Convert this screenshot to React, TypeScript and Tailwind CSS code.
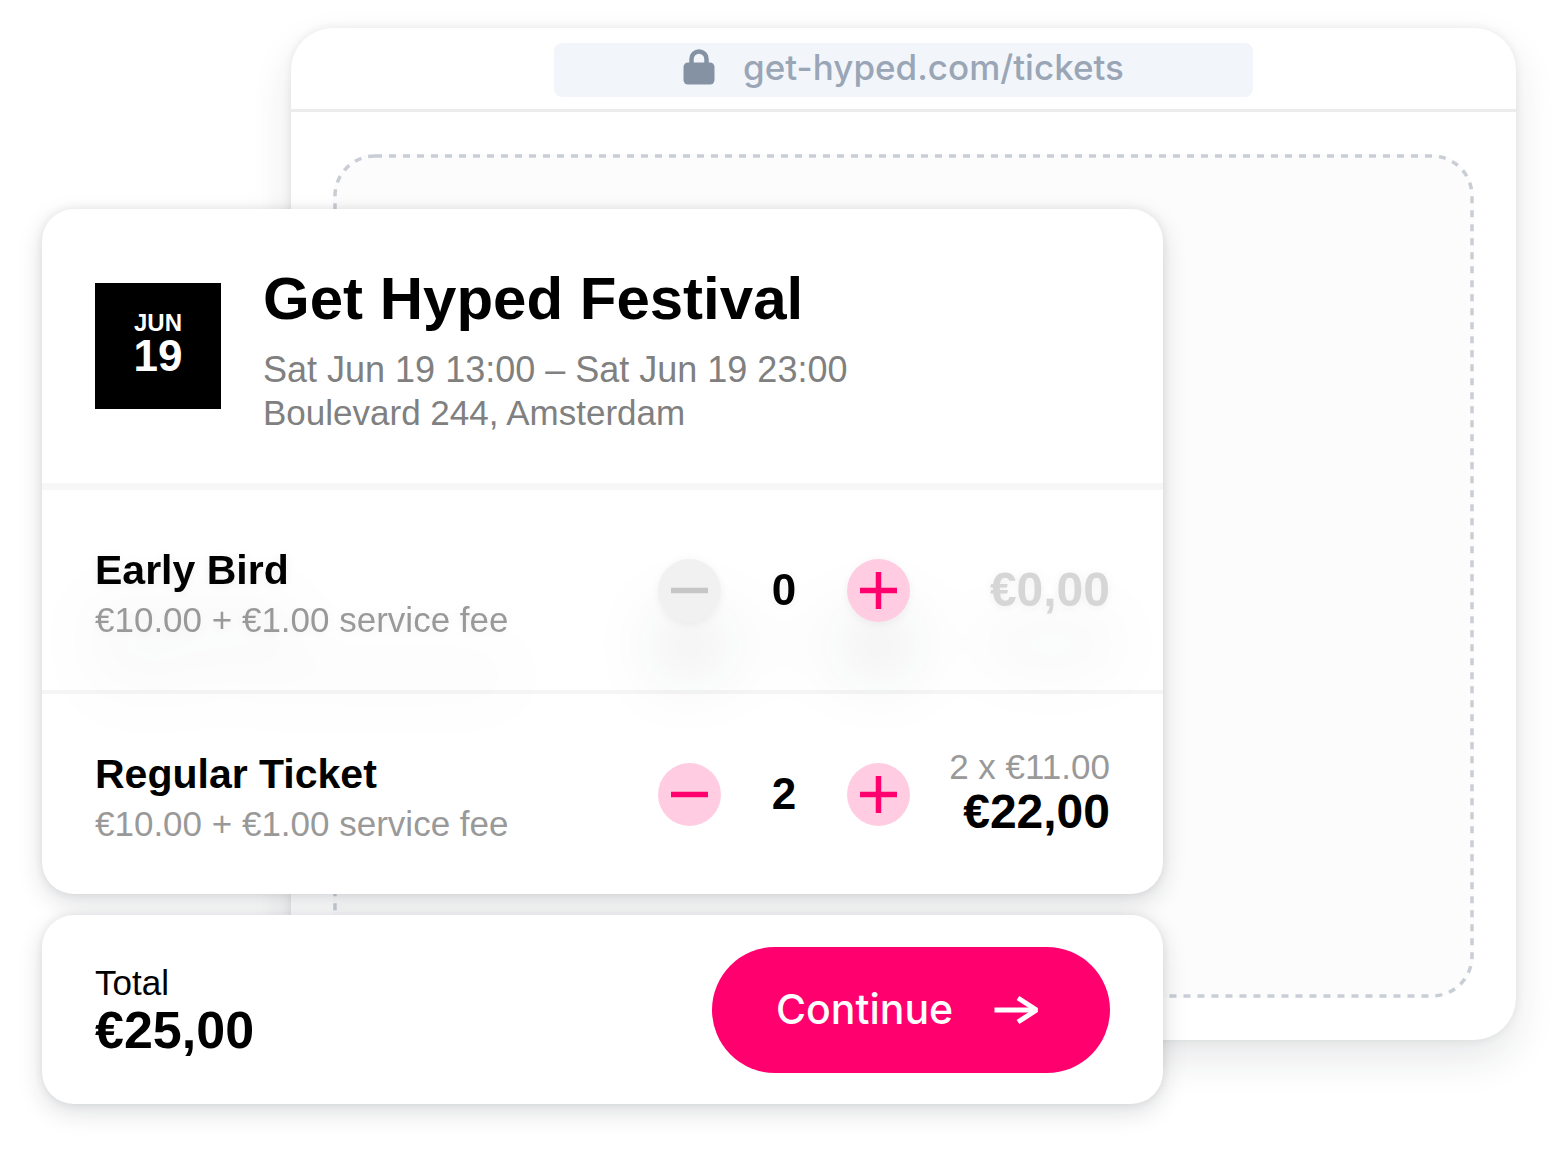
import clsx from "clsx";
import type { ReactNode } from "react";

type Ticket = {
  name: string;
  price: string;
  quantity: number;
  breakdown?: string;
  total: string;
};

const tickets: Ticket[] = [
  { name: "Early Bird", price: "€10.00 + €1.00 service fee", quantity: 0, total: "€0,00" },
  {
    name: "Regular Ticket",
    price: "€10.00 + €1.00 service fee",
    quantity: 2,
    breakdown: "2 x €11.00",
    total: "€22,00",
  },
];

function LockIcon() {
  return (
    <svg width="32" height="36" viewBox="0 0 32 36" fill="none" aria-hidden="true" className="shrink-0">
      <rect x="0.5" y="13.5" width="31" height="22" rx="4.5" fill="#8592a3" />
      <path d="M8.5 15V10a7.5 7.5 0 0 1 15 0V15" stroke="#8592a3" strokeWidth="4.5" />
    </svg>
  );
}

function ArrowIcon() {
  return (
    <svg width="46" height="30" viewBox="0 0 46 30" fill="none" aria-hidden="true" className="shrink-0">
      <path d="M0.5 15H42" stroke="white" strokeWidth="5" />
      <path d="M24 3L42.5 15L24 27" stroke="white" strokeWidth="5" strokeLinejoin="bevel" />
    </svg>
  );
}

function StepButton({ kind, label, disabled }: { kind: "minus" | "plus"; label: string; disabled?: boolean }) {
  return (
    <button
      type="button"
      aria-label={label}
      disabled={disabled}
      className={clsx(
        "size-[63px] shrink-0 rounded-full",
        disabled ? "bg-[#f1f1f1] text-[#c6c6c6]" : "bg-[#ffcce2] text-[#ff006e]",
      )}
    >
      <svg viewBox="0 0 63 63" fill="none" stroke="currentColor" strokeWidth="5.5" aria-hidden="true">
        <path d="M13 31.5h37" />
        {kind === "plus" ? <path d="M31.5 13v37" /> : null}
      </svg>
    </button>
  );
}

function TicketRow({ ticket }: { ticket: Ticket }) {
  const empty = ticket.quantity === 0;

  return (
    <li
      className={clsx(
        "border-[#f5f5f5] not-first:border-t-4",
        empty &&
          "[filter:drop-shadow(0_2px_5px_rgba(0,0,0,0.06))_drop-shadow(0_54px_32px_rgba(20,25,25,0.1))]",
      )}
    >
      <div className="flex h-[200px] items-center px-[53px]">
        <div className="min-w-0 flex-1">
          <h2 className="text-[41px] leading-[60px] font-bold">{ticket.name}</h2>
          <p className="text-[35px] leading-[40px] whitespace-nowrap text-[#999999]">{ticket.price}</p>
        </div>

        <div className="flex items-center">
          <StepButton kind="minus" label={`Remove one ${ticket.name}`} disabled={empty} />
          <span className="w-[126px] text-center text-[44px] leading-[52px] font-bold">{ticket.quantity}</span>
          <StepButton kind="plus" label={`Add one ${ticket.name}`} />
        </div>

        <div className="w-[200px] shrink-0 text-right">
          {ticket.breakdown ? <p className="text-[35px] leading-[36px] text-[#999999]">{ticket.breakdown}</p> : null}
          <p className={clsx("text-[48px] leading-[54px] font-bold", empty && "text-[#d6d6d6]")}>{ticket.total}</p>
        </div>
      </div>
    </li>
  );
}

function BrowserWindow() {
  return (
    <div className="mb-16 ml-[249px] flex flex-col rounded-[42px] bg-white shadow-[0_0_10px_rgba(0,0,0,0.08),0_18px_42px_rgba(30,35,45,0.11)] [grid-area:1/1]">
      <div className="flex justify-center border-b-[3px] border-[#ececec] pt-[15px] pb-3">
        <div className="flex h-[54px] w-[57%] items-center justify-center gap-7 rounded-lg bg-[#f2f6fb] pb-1.5">
          <LockIcon />
          <input
            type="text"
            aria-label="Address"
            readOnly
            value="get-hyped.com/tickets"
            className="field-sizing-content font-['Inter',sans-serif] text-[35px] leading-[44px] font-medium text-[#9aa6b6] outline-none"
          />
        </div>
      </div>
      <div className="flex flex-1 p-[42px]">
        <div className="flex-1 rounded-[42px] bg-[#fcfcfc]">
          <svg width="100%" height="100%" fill="none" aria-hidden="true">
            <rect
              x="2"
              y="2"
              rx="40"
              className="h-[calc(100%-4px)] w-[calc(100%-4px)]"
              stroke="#c9ced6"
              strokeWidth="3.5"
              strokeDasharray="7 7"
            />
          </svg>
        </div>
      </div>
    </div>
  );
}

function Panel({ className, children }: { className?: string; children: ReactNode }) {
  return (
    <section
      className={clsx(
        "rounded-[32px] bg-white shadow-[0_0_10px_rgba(0,0,0,0.08),0_8px_24px_rgba(30,35,45,0.15)]",
        className,
      )}
    >
      {children}
    </section>
  );
}

export default function App() {
  return (
    <main className="grid min-h-screen bg-white px-[42px] pt-7 pb-[58px] font-['Liberation_Sans',Arial,sans-serif] text-black">
      <BrowserWindow />

      <div className="mt-[181px] mr-[353px] flex flex-col gap-[21px] [grid-area:1/1]">
        <Panel>
          <header className="flex items-center gap-[42px] border-b-[7px] border-[#f7f7f7] px-[53px] pt-12 pb-[49px]">
            <time
              dateTime="06-19"
              className="flex size-[126px] shrink-0 flex-col items-center justify-center bg-black pb-1 font-bold text-white"
            >
              <span className="text-[24px] leading-[24px]">JUN</span>
              <span className="text-[44px] leading-[42px]">19</span>
            </time>
            <div className="whitespace-nowrap">
              <h1 className="mb-[7px] text-[60px] leading-[84px] font-bold">Get Hyped Festival</h1>
              <p className="text-[36px] leading-[43px] text-[#808080]">Sat Jun 19 13:00 – Sat Jun 19 23:00</p>
              <p className="text-[35px] leading-[43px] text-[#808080]">Boulevard 244, Amsterdam</p>
            </div>
          </header>
          <ul>
            {tickets.map((ticket) => (
              <TicketRow key={ticket.name} ticket={ticket} />
            ))}
          </ul>
        </Panel>

        <Panel className="flex h-[189px] items-center justify-between px-[53px]">
          <div>
            <p className="text-[35px] leading-[40px]">Total</p>
            <p className="text-[52px] leading-[54px] font-bold">€25,00</p>
          </div>
          <button
            type="button"
            className="flex h-[126px] w-[398px] items-center justify-between rounded-full bg-[#ff006e] pr-[70px] pl-16 font-['Inter',sans-serif] text-[41px] font-medium text-white"
          >
            Continue
            <ArrowIcon />
          </button>
        </Panel>
      </div>
    </main>
  );
}
